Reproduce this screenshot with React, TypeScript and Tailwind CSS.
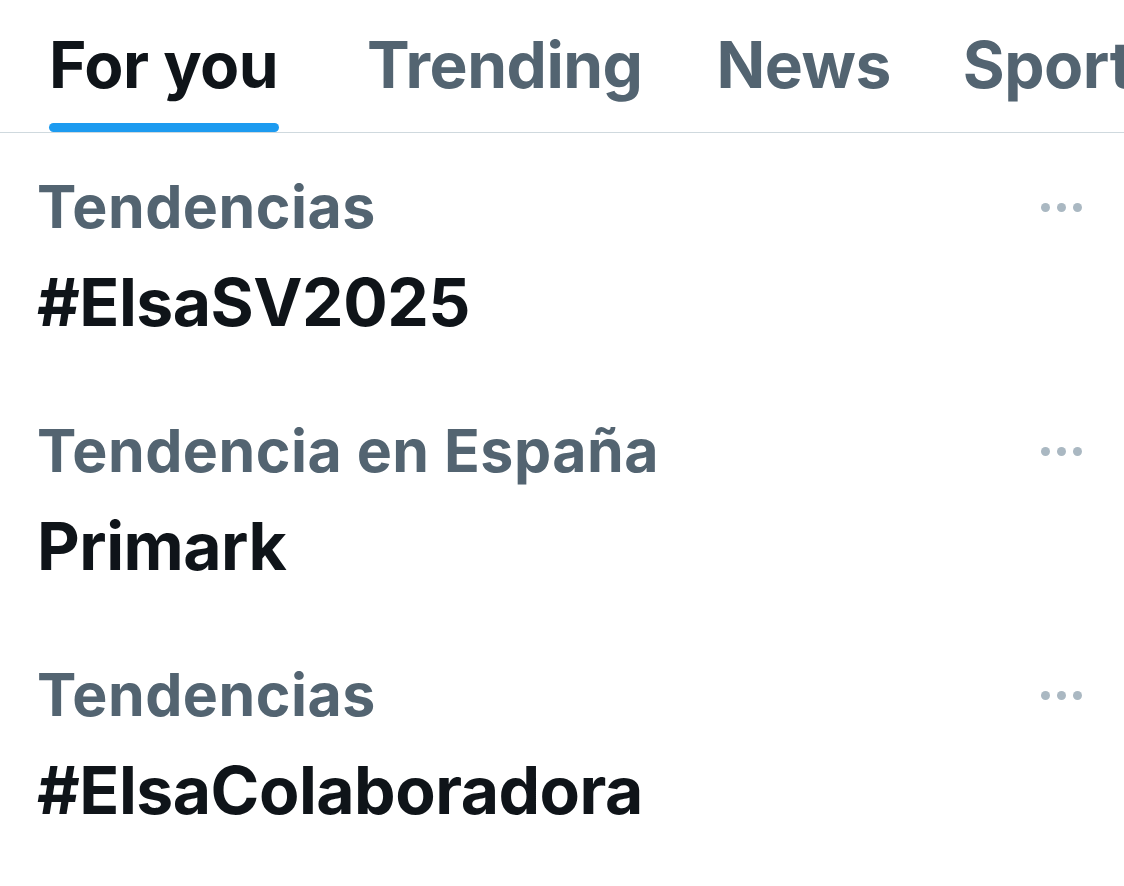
const TABS = [
  { label: 'For you',  space: 'mr-[88px]' },
  { label: 'Trending', space: 'mr-[74px]' },
  { label: 'News',     space: 'mr-[72px]' },
  { label: 'Sports',   space: '' },
]

const TRENDS = [
  { category: 'Tendencias',           name: '#ElsaSV2025' },
  { category: 'Tendencia en España',  name: 'Primark' },
  { category: 'Tendencias',           name: '#ElsaColaboradora' },
]

function Dots() {
  return (
    <div className="flex items-center gap-[7px]">
      <span className="w-[9px] h-[9px] rounded-full bg-[#aab8c2]" />
      <span className="w-[9px] h-[9px] rounded-full bg-[#aab8c2]" />
      <span className="w-[9px] h-[9px] rounded-full bg-[#aab8c2]" />
    </div>
  )
}

export default function App() {
  return (
    <div className="w-[1124px] h-[886px] bg-white overflow-hidden"
      style={{ fontFamily: "Inter, 'Noto Sans', sans-serif" }}>

      {/* tabs */}
      <nav className="flex pl-[49px] h-[133px] border-b border-[#cfd9de] whitespace-nowrap">
        {TABS.map((t, i) => (
          <div key={t.label} className={`flex flex-col pt-[22px] shrink-0 ${t.space}`}>
            <span className={`text-[64px] font-bold leading-[86px] tracking-[-0.5px] ${i === 0 ? 'text-[#0f1419]' : 'text-[#536471]'}`}>
              {t.label}
            </span>
            {i === 0 && <span className="mt-auto h-[9px] rounded-full bg-[#1d9bf0] w-[230px]" />}
          </div>
        ))}
      </nav>

      {/* trends */}
      <div className="flex flex-col pt-[34px]">
        {TRENDS.map((tr, i) => (
          <div key={i} className="flex justify-between pl-[37px] pr-[42px] h-[244px]">
            <div className="flex flex-col">
              <span className="text-[59px] font-bold leading-[80px] text-[#536471] tracking-[0.5px]">{tr.category}</span>
              <span className="text-[66px] font-bold leading-[92px] pt-[9px] text-[#0f1419] tracking-[-0.5px]">{tr.name}</span>
            </div>
            <div className="pt-[36px]"><Dots /></div>
          </div>
        ))}
      </div>
    </div>
  )
}
